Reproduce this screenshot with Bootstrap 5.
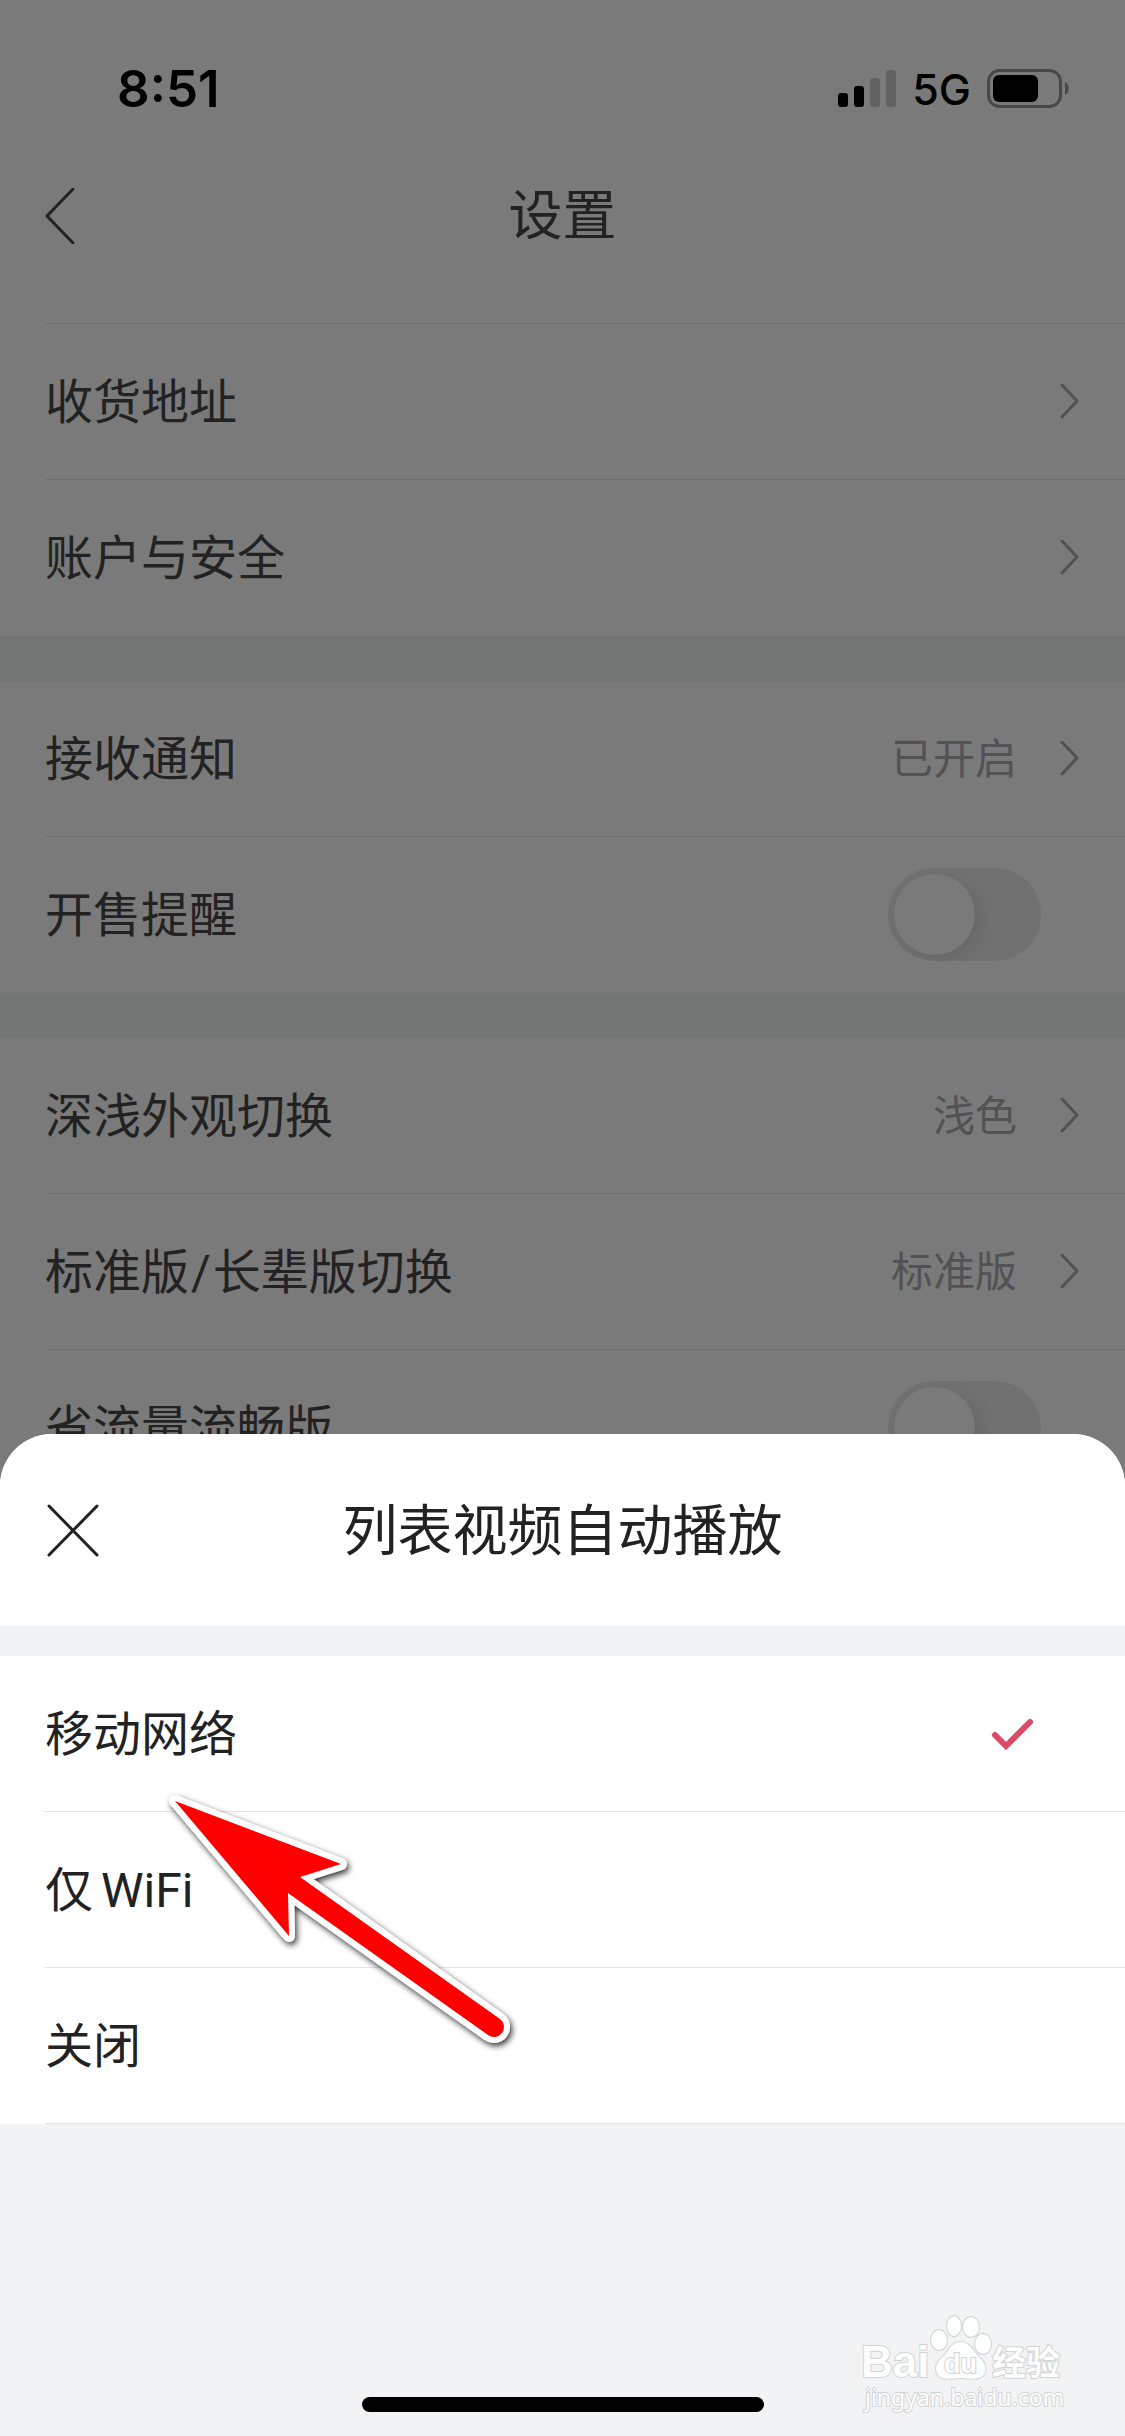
<!DOCTYPE html>
<html lang="zh-CN">
<head>
<meta charset="utf-8">
<meta name="viewport" content="width=device-width, initial-scale=1">
<title>设置</title>
<link href="https://cdn.jsdelivr.net/npm/bootstrap@5.3.0/dist/css/bootstrap.min.css" rel="stylesheet">
<style>
  :root {
    --dim-bg: #7a7a7a;
    --dim-gap: #737675;
    --dim-line: #6f6f6f;
    --dim-muted: #525254;
    --ink: #222;
    --sheet-gap: #f2f3f5;
    --sheet-line: #e5e5e5;
    --edge: 45px;
  }
  body { font-family: Roboto, "Noto Sans CJK SC", sans-serif; font-size: 48px; line-height: 72px; color: var(--ink); background: var(--dim-bg); }
  svg { display: block; flex: none; }
  .screen { background: var(--dim-bg); }
  .status-bar { font-family: Inter, sans-serif; padding: 53px 56px 7px 117px; }
  .clock { font-size: 51px; font-weight: 600; }
  .network { font-size: 43px; font-weight: 500; }
  .title-bar { height: 168px; padding: 0 var(--edge); }
  .title-text { font-size: 54px; line-height: 80px; font-weight: 400; }
  .label-text, .title-text, .sheet-title, .setting-value { padding-top: 2px; }
  .icon-btn { width: 56px; height: 56px; }
  .setting-group { background: var(--dim-bg); }
  .setting-group + .setting-group { border-top: 45px solid var(--dim-gap); }
  .first-group { padding-top: 23px; }
  .first-group::before { content: ""; display: block; height: 1px; margin-left: var(--edge); background: var(--dim-line); }
  .setting-row { height: 156px; margin-left: var(--edge); padding-right: var(--edge); color: var(--ink); border-bottom: 1px solid var(--dim-line); }
  .setting-group .setting-row:last-child { border-bottom-color: transparent; }
  .setting-value { font-size: 42px; color: var(--dim-muted); }
  .value-pair { gap: 43px; }
  .slash { padding: 0 2px; }
  .switch-row { padding-right: 84px; }
  .switch-row .form-check-input { width: 153px; height: 93px; margin: 0; padding: 6px; border: 0; border-radius: 47px; background: #717171; overflow: hidden; }
  .switch-row .form-check-input::before { content: ""; display: block; width: 81px; height: 81px; border-radius: 50%; background: var(--dim-bg); box-shadow: 6px 6px 18px rgba(0, 0, 0, .09); }
  .switch-row .form-check-input:checked::before { margin-left: auto; }
  .sheet { background: var(--sheet-gap); border-radius: 52px 52px 0 0; overflow: hidden; }
  .sheet-head { height: 192px; padding: 0 var(--edge); background: #fff; }
  .sheet-title { font-size: 55px; line-height: 80px; font-weight: 400; }
  .option-list { margin-top: 30px; background: #fff; }
  .option-row { height: 156px; margin-left: var(--edge); padding-right: 90px; border-bottom: 1px solid var(--sheet-line); }
  .option-row svg { visibility: hidden; }
  .option-row input:checked ~ svg { visibility: visible; }
  .sheet-foot { height: 312px; padding-bottom: 24px; }
  .home-bar { width: 402px; height: 15px; border-radius: 8px; background: #000; }
  .watermark { right: 50px; bottom: 20px; }
  .pointer-arrow { left: 150px; top: 346px; }
</style>
<script src="https://cdn.jsdelivr.net/npm/bootstrap@5.3.0/dist/js/bootstrap.bundle.min.js"></script>
</head>
<body>
<svg class="d-none" aria-hidden="true">
  <symbol id="chevron" viewBox="0 0 20 36"><path d="M2 1 17 17 2 33" fill="none" stroke="#525254" stroke-width="3" stroke-linecap="round" stroke-linejoin="round"/></symbol>
  <symbol id="tick" viewBox="0 0 44 34"><path d="M4 18 15 29 39 5" fill="none" stroke="#dd4a68" stroke-width="6" stroke-linecap="round" stroke-linejoin="miter"/></symbol>
</svg>
<div class="screen position-relative min-vh-100 overflow-hidden">
  <div class="status-bar d-flex align-items-center justify-content-between text-black">
    <span class="clock">8:51</span>
    <div class="d-flex align-items-center">
      <svg width="58" height="38" viewBox="0 0 58 38" aria-hidden="true">
        <rect x="0" y="23" width="10" height="14" rx="3"/><rect x="16" y="16" width="10" height="21" rx="3"/>
        <rect x="32" y="8" width="10" height="29" rx="3" fill="#626262"/><rect x="48" y="0" width="10" height="37" rx="3" fill="#626262"/>
      </svg>
      <span class="network mx-3">5G</span>
      <svg width="82" height="40" viewBox="0 0 82 40" aria-hidden="true">
        <rect x="1.500" y="1.500" width="72" height="36" rx="11" fill="none" stroke="#484848" stroke-width="3"/>
        <rect x="6" y="6" width="45" height="27" rx="6"/><path d="M78 13c5 2 5 11 0 13z" fill="#484848"/>
      </svg>
    </div>
  </div>
  <header class="title-bar d-flex align-items-center justify-content-between">
    <button type="button" class="icon-btn btn p-0 border-0" aria-label="返回">
      <svg width="30" height="56" viewBox="0 0 30 56"><path d="M28 1 2 28 28 55" fill="none" stroke="#222" stroke-width="3" stroke-linecap="round" stroke-linejoin="round"/></svg>
    </button>
    <h1 class="title-text mb-0">设置</h1>
    <span class="icon-btn"></span>
  </header>
  <main>
    <section class="setting-group first-group">
      <a href="#" class="setting-row d-flex align-items-center justify-content-between text-decoration-none"><span class="label-text">收货地址</span><svg width="20" height="36"><use href="#chevron"/></svg></a>
      <a href="#" class="setting-row d-flex align-items-center justify-content-between text-decoration-none"><span class="label-text">账户与安全</span><svg width="20" height="36"><use href="#chevron"/></svg></a>
    </section>
    <section class="setting-group">
      <a href="#" class="setting-row d-flex align-items-center justify-content-between text-decoration-none"><span class="label-text">接收通知</span><span class="value-pair d-flex align-items-center"><span class="setting-value">已开启</span><svg width="20" height="36"><use href="#chevron"/></svg></span></a>
      <div class="setting-row switch-row d-flex align-items-center justify-content-between"><label class="label-text" for="saleAlert">开售提醒</label><input class="form-check-input" type="checkbox" role="switch" id="saleAlert"></div>
    </section>
    <section class="setting-group">
      <a href="#" class="setting-row d-flex align-items-center justify-content-between text-decoration-none"><span class="label-text">深浅外观切换</span><span class="value-pair d-flex align-items-center"><span class="setting-value">浅色</span><svg width="20" height="36"><use href="#chevron"/></svg></span></a>
      <a href="#" class="setting-row d-flex align-items-center justify-content-between text-decoration-none"><span class="label-text">标准版<span class="slash">/</span>长辈版切换</span><span class="value-pair d-flex align-items-center"><span class="setting-value">标准版</span><svg width="20" height="36"><use href="#chevron"/></svg></span></a>
      <div class="setting-row switch-row d-flex align-items-center justify-content-between"><label class="label-text" for="dataSaver">省流量流畅版</label><input class="form-check-input" type="checkbox" role="switch" id="dataSaver"></div>
    </section>
  </main>

  <section class="sheet position-absolute bottom-0 start-0 end-0" role="dialog" aria-labelledby="sheetTitle">
    <header class="sheet-head d-flex align-items-center justify-content-between">
      <button type="button" class="icon-btn btn p-0 border-0" aria-label="关闭">
        <svg width="56" height="56" viewBox="0 0 56 56"><path d="M4 4 52 53M52 4 4 53" fill="none" stroke="#222" stroke-width="3" stroke-linecap="round"/></svg>
      </button>
      <h2 class="sheet-title mb-0" id="sheetTitle">列表视频自动播放</h2>
      <span class="icon-btn"></span>
    </header>
    <div class="option-list" role="radiogroup" aria-labelledby="sheetTitle">
      <label class="option-row d-flex align-items-center justify-content-between"><input class="visually-hidden" type="radio" name="autoplay" checked><span class="label-text">移动网络</span><svg width="44" height="34"><use href="#tick"/></svg></label>
      <label class="option-row d-flex align-items-center justify-content-between"><input class="visually-hidden" type="radio" name="autoplay"><span class="label-text d-flex gap-2"><span>仅</span><span>WiFi</span></span><svg width="44" height="34"><use href="#tick"/></svg></label>
      <label class="option-row d-flex align-items-center justify-content-between"><input class="visually-hidden" type="radio" name="autoplay"><span class="label-text">关闭</span><svg width="44" height="34"><use href="#tick"/></svg></label>
    </div>
    <div class="sheet-foot d-flex align-items-end justify-content-center"><div class="home-bar"></div></div>

    <svg class="pointer-arrow position-absolute pe-none" width="380" height="290" viewBox="150 1780 380 290" aria-hidden="true">
      <defs><filter id="soft" x="-10%" y="-10%" width="125%" height="125%"><feDropShadow dx="2" dy="3" stdDeviation="3" flood-opacity=".8"/></filter></defs>
      <path d="M175 1801 341 1864 300 1877 500 2019A10 10 0 0 1 488 2035L288 1893 289 1936Z" fill="#fff" stroke="#fff" stroke-width="12" stroke-linejoin="round" filter="url(#soft)"/>
      <path d="M175 1801 341 1864 300 1877 500 2019A10 10 0 0 1 488 2035L288 1893 289 1936Z" fill="#f00"/>
    </svg>

    <svg class="watermark position-absolute" width="215" height="110" viewBox="860 2306 215 110" fill="#fcfdfd" stroke="#d2d3d4" stroke-width="2" paint-order="stroke" aria-label="Baidu 经验">
      <text x="861" y="2377" font-family="Liberation Sans, sans-serif" font-weight="700" font-size="44">Bai</text>
      <g stroke-width="2">
        <ellipse cx="939" cy="2340" rx="8" ry="10"/><ellipse cx="954" cy="2326" rx="7" ry="10"/>
        <ellipse cx="971" cy="2327" rx="8" ry="10"/><ellipse cx="983" cy="2344" rx="8" ry="10"/>
        <path d="M960 2342C969 2342 973 2350 978 2356C984 2361 987 2367 985 2372C982 2382 969 2378 961 2378C951 2378 940 2382 937 2373C934 2367 938 2360 944 2356C949 2350 952 2342 960 2342Z"/>
      </g>
      <text x="944" y="2373" font-family="Liberation Sans, sans-serif" font-weight="700" font-size="27">du</text>
      <text x="992" y="2375" font-family="Noto Sans CJK SC, sans-serif" font-weight="700" font-size="34">经验</text>
      <text x="865" y="2406" font-family="Noto Sans, sans-serif" font-size="23">jingyan.baidu.com</text>
    </svg>
  </section>
</div>
</body>
</html>
